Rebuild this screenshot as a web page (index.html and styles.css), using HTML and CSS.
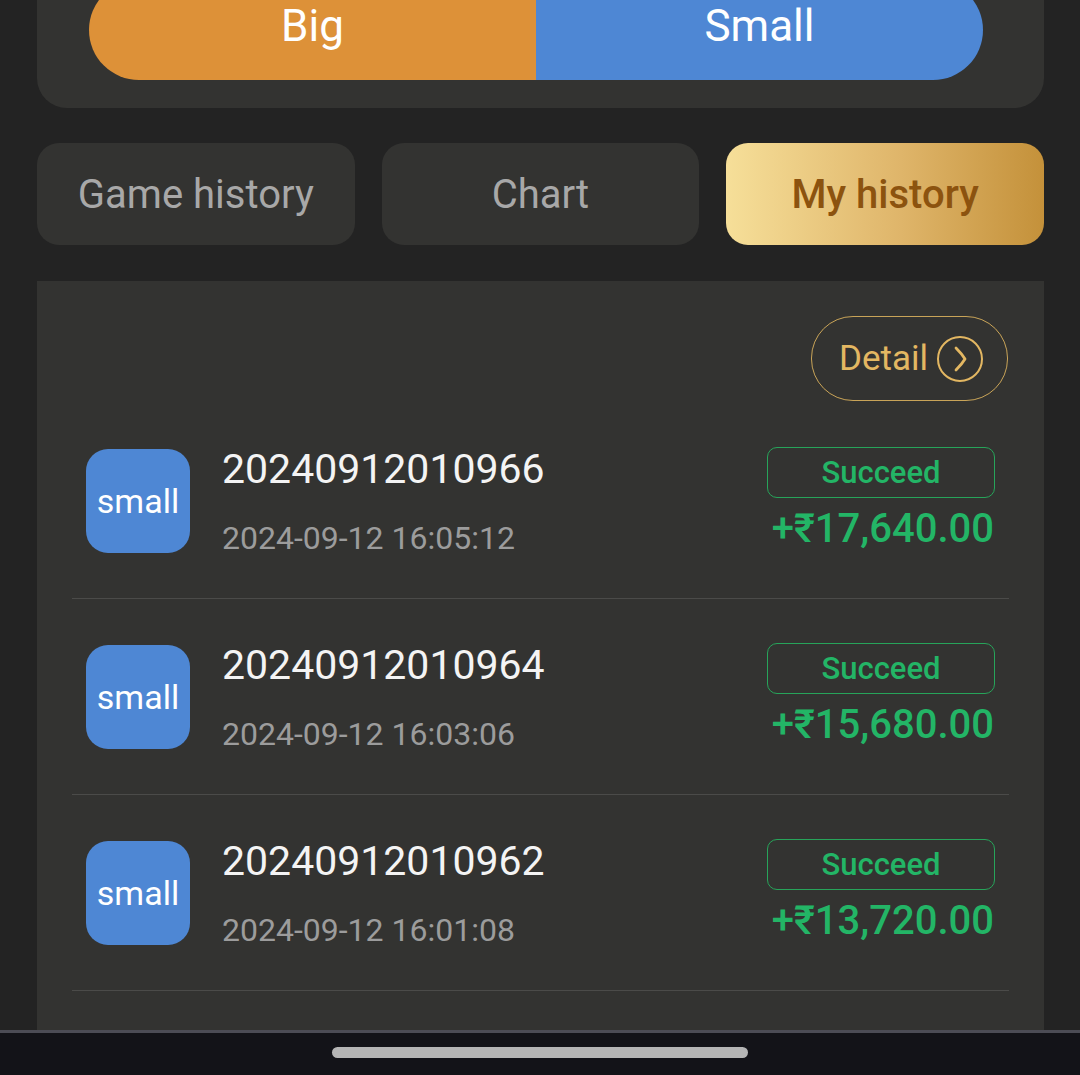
FILE: index.html
```html
<!DOCTYPE html>
<html lang="en">
<head>
    <meta charset="UTF-8">
    <meta name="viewport" content="width=device-width, initial-scale=1.0">
    <title>My history</title>
    <link rel="stylesheet" href="styles.css">
</head>
<body>
    <div class="page">
        <div class="bet-card">
            <div class="size-toggle">
                <button class="size-btn big">Big</button>
                <button class="size-btn small">Small</button>
            </div>
        </div>

        <div class="tabs">
            <div class="tab">Game history</div>
            <div class="tab">Chart</div>
            <div class="tab active">My history</div>
        </div>

        <div class="history-panel">
            <div class="detail-row">
                <a class="detail-btn" href="#">
                    Detail
                    <span class="detail-icon">
                        <svg width="28" height="28" viewBox="0 0 28 28">
                            <path d="M10 3 Q16 9 19 14 Q16 19 10 25" fill="none" stroke="#e3b762" stroke-width="2.8" stroke-linecap="round" stroke-linejoin="round"/>
                        </svg>
                    </span>
                </a>
            </div>

            <div class="record">
                <div class="record-badge">small</div>
                <div class="record-info">
                    <div class="issue">20240912010966</div>
                    <div class="time">2024-09-12 16:05:12</div>
                </div>
                <div class="record-result">
                    <div class="status">Succeed</div>
                    <div class="amount">+₹17,640.00</div>
                </div>
            </div>

            <div class="record">
                <div class="record-badge">small</div>
                <div class="record-info">
                    <div class="issue">20240912010964</div>
                    <div class="time">2024-09-12 16:03:06</div>
                </div>
                <div class="record-result">
                    <div class="status">Succeed</div>
                    <div class="amount">+₹15,680.00</div>
                </div>
            </div>

            <div class="record">
                <div class="record-badge">small</div>
                <div class="record-info">
                    <div class="issue">20240912010962</div>
                    <div class="time">2024-09-12 16:01:08</div>
                </div>
                <div class="record-result">
                    <div class="status">Succeed</div>
                    <div class="amount">+₹13,720.00</div>
                </div>
            </div>
        </div>
    </div>

    <div class="nav-bar">
        <div class="home-indicator"></div>
    </div>
</body>
</html>
```

FILE: styles.css
```css
html, body {
    margin: 0;
    height: 100%;
}

body {
    font-family: 'Roboto', 'Noto Sans', sans-serif;
    background: #232323;
    display: flex;
    flex-direction: column;
    overflow: hidden;
}

.page {
    flex: 1;
    padding: 0 36px 0 37px;
    display: flex;
    flex-direction: column;
    overflow: hidden;
}

.bet-card {
    background: #333331;
    margin-top: -40px;
    padding: 20px 61px 28px 52px;
    border-radius: 0 0 30px 30px;
}

.size-toggle {
    display: flex;
    height: 100px;
    border-radius: 50px;
    overflow: hidden;
}

.size-btn {
    flex: 1;
    border: none;
    color: #fff;
    font-family: inherit;
    font-size: 44px;
    padding: 0 0 8px;
}

.size-btn.big {
    background: #dd9138;
}

.size-btn.small {
    background: #4e87d4;
}

.tabs {
    display: grid;
    grid-template-columns: 1fr 1fr 1fr;
    gap: 27px;
    margin-top: 35px;
}

.tab {
    height: 102px;
    border-radius: 22px;
    background: #333331;
    color: #a8a8a8;
    font-size: 40px;
    display: flex;
    align-items: center;
    justify-content: center;
}

.tab.active {
    background: linear-gradient(90deg, #f6df99 0%, #dfb56a 55%, #c4913a 100%);
    color: #8c530f;
    font-weight: 500;
}

.history-panel {
    flex: 1;
    margin-top: 36px;
    background: #333331;
    padding: 35px 35px 0;
}

.detail-row {
    display: flex;
    justify-content: flex-end;
    margin-bottom: 2px;
}

.detail-btn {
    display: flex;
    align-items: center;
    gap: 9px;
    height: 83px;
    padding: 0 24px 0 27px;
    border: 1px solid #c9a458;
    border-radius: 42px;
    color: #e3b762;
    font-size: 35px;
    text-decoration: none;
    margin-right: 1px;
}

.detail-icon {
    width: 42px;
    height: 42px;
    border: 2px solid #e3b762;
    border-radius: 50%;
    display: flex;
    align-items: center;
    justify-content: center;
}

.record {
    height: 196px;
    border-bottom: 1px solid #4b4b49;
    display: flex;
    align-items: center;
    padding: 0 14px;
    box-sizing: border-box;
}

.record-badge {
    width: 104px;
    height: 104px;
    border-radius: 22px;
    background: #4e87d4;
    color: #fff;
    font-size: 34px;
    display: flex;
    align-items: center;
    justify-content: center;
    flex-shrink: 0;
}

.record-info {
    flex: 1;
    margin-left: 32px;
}

.issue {
    color: #f4f4f4;
    font-size: 41px;
    line-height: 48px;
}

.time {
    color: #9c9c9c;
    font-size: 32px;
    line-height: 38px;
    margin-top: 26px;
}

.record-result {
    display: flex;
    flex-direction: column;
    align-items: flex-end;
    margin-top: -3px;
}

.status {
    width: 226px;
    height: 49px;
    border: 1px solid #27a45a;
    border-radius: 10px;
    color: #23b566;
    font-size: 31px;
    font-weight: 500;
    display: flex;
    align-items: center;
    justify-content: center;
}

.amount {
    color: #23b566;
    font-size: 40px;
    font-weight: 500;
    line-height: 46px;
    margin-top: 8px;
    margin-right: 1px;
}

.nav-bar {
    border-top: 3px solid #4c4c55;
    background: #131318;
    display: flex;
    justify-content: center;
    padding-top: 14px;
    flex-shrink: 0;
    height: 28px;
}

.home-indicator {
    width: 416px;
    height: 11px;
    border-radius: 6px;
    background: #b5b5b5;
}
```
